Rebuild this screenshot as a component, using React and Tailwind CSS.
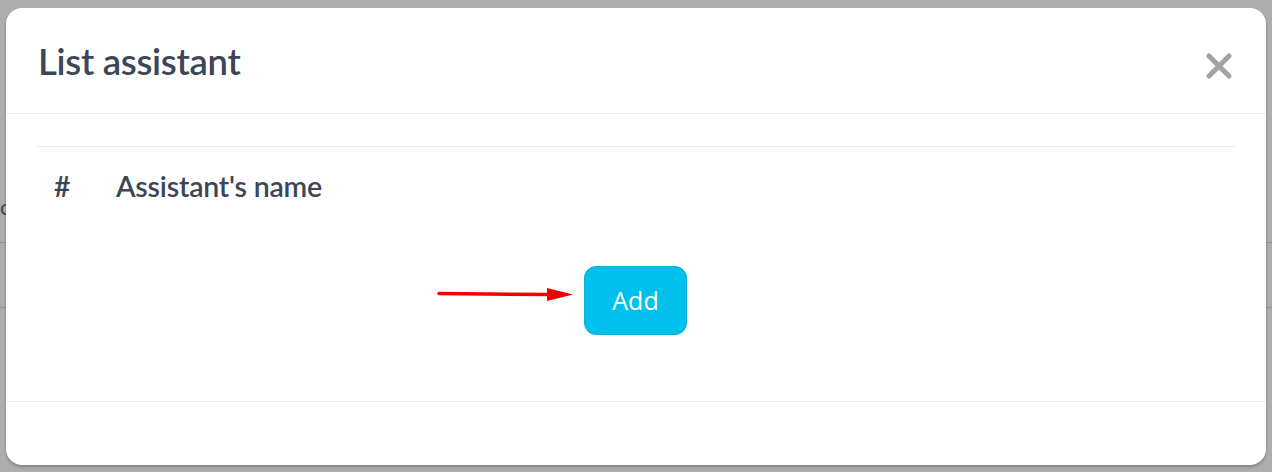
import React from 'react'

// Faint page behind the overlay (only the edges peek out)
function BackgroundPage() {
  return (
    <div className="flex flex-col h-full bg-white">
      <div className="h-[190px]" />
      <div className="h-[53px] border-b border-[#d8d8d8] text-[#666] text-[22px] pl-0">c</div>
      <div className="h-[65px] border-b border-[#d8d8d8]" />
      <div className="flex-1" />
    </div>
  )
}

function CloseIcon() {
  return (
    <svg width="26" height="26" viewBox="0 0 26 26" aria-hidden="true">
      <path d="M3 3 L23 23 M23 3 L3 23" stroke="#a3a3a3" strokeWidth="5" strokeLinecap="round" />
    </svg>
  )
}

function Arrow() {
  return (
    <svg width="136" height="14" viewBox="0 0 136 14" className="mb-[14px]" aria-hidden="true">
      <line x1="2" y1="6.5" x2="112" y2="7.5" stroke="#f20000" strokeWidth="3.5" strokeLinecap="round" />
      <polygon points="110,1 136,7.5 110,14" fill="#f20000" />
    </svg>
  )
}

export default function App() {
  return (
    <div className="relative w-[1272px] h-[472px] overflow-hidden" style={{ fontFamily: 'Lato, "Noto Sans", sans-serif' }}>
      <BackgroundPage />

      {/* Modal backdrop */}
      <div className="absolute inset-0 bg-black/[0.32] pt-[8px] px-[6px]">
        <div className="flex flex-col h-[457px] bg-white rounded-[16px] shadow-[0_2px_3px_rgba(0,0,0,0.25)]">
          {/* Header */}
          <div className="flex items-center justify-between h-[106px] pl-[32px] pr-[34px] border-b border-[#ededed] flex-none">
            <h2 className="text-[36.5px] font-semibold text-[#3b4656] tracking-[-0.3px] pt-[2px]">List assistant</h2>
            <div className="pt-[10px]"><CloseIcon /></div>
          </div>

          {/* Body */}
          <div className="flex-1 px-[31px] pt-[32px]">
            <div className="border-t border-[#ececec] flex items-center h-[80px] text-[28.5px] font-semibold text-[#3b4656]">
              <span className="w-[79px] pl-[17px]">#</span>
              <span className="tracking-[-0.2px]">Assistant's name</span>
            </div>
            <div className="flex items-center pl-[400px] mt-[40px] gap-[11px]">
              <Arrow />
              <button className="w-[103px] h-[69px] rounded-[12px] bg-[#00c0ed] border border-[#10aedb] text-white text-[25px]" style={{ fontFamily: '"Open Sans", sans-serif' }}>
                Add
              </button>
            </div>
          </div>

          {/* Footer */}
          <div className="h-[64px] border-t border-[#ededed] flex-none" />
        </div>
      </div>
    </div>
  )
}
